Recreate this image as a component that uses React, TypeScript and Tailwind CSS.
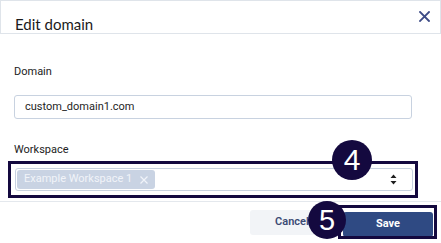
import React from 'react';

const Badge = ({ n, className }: { n: string; className: string }) => (
  <div
    className={`absolute rounded-full bg-[#14093f] text-white flex items-center justify-center font-['Liberation_Sans',sans-serif] leading-none ${className}`}
  >
    {n}
  </div>
);

export default function App() {
  return (
    <div className="relative w-[441px] h-[243px] overflow-hidden bg-white font-['Roboto',sans-serif] text-[#222]">
      {/* Header */}
      <div className="h-[34px] border border-[#dfe4ea] flex justify-between items-start">
        <div className="pl-[14px] pt-[13px] text-[15px] leading-[20px] text-[#1b1b1b] font-['Lato',sans-serif]">
          Edit domain
        </div>
        <svg className="mt-[10px] mr-[10px]" width="11" height="11" viewBox="0 0 11 11">
          <path d="M1 1L10 10M10 1L1 10" stroke="#3d4b86" strokeWidth="1.8" strokeLinecap="square" />
        </svg>
      </div>

      {/* Body */}
      <div className="px-[14px] pt-[31px] pb-[10px]">
        <div className="text-[11px] leading-[13px] text-[#222]">Domain</div>
        <div className="mt-[17px] w-[398px] h-[24px] border border-[#c8d2e0] rounded-[3px] flex items-center pl-[10px] text-[11px] text-[#1e1e1e]">
          custom_domain1.com
        </div>

        <div className="mt-[24px] text-[11px] leading-[13px] text-[#222]">Workspace</div>
        <div className="relative mt-[12px]">
          <div className="w-[398px] h-[23px] ml-[1px] border border-[#c8d2e0] rounded-[3px] flex items-center justify-between pl-[1px] pr-[15px]">
            <div className="h-[19px] px-[7px] rounded-[3px] bg-[#c9d3e3] flex items-center gap-[8px] text-[11px] text-[#f1f4f9]">
              <span>Example Workspace 1</span>
              <svg width="8" height="8" viewBox="0 0 8 8">
                <path d="M0.5 0.5L7.5 7.5M7.5 0.5L0.5 7.5" stroke="#f1f4f9" strokeWidth="1.2" />
              </svg>
            </div>
            <svg width="7" height="11" viewBox="0 0 7 11">
              <path d="M3.5 0.5L6.5 4H0.5Z M0.5 7H6.5L3.5 10.5Z" fill="#1e1e1e" />
            </svg>
          </div>
          {/* highlight */}
          <div className="absolute -left-[6px] -top-[7px] w-[410px] h-[37px] border-[3px] border-[#14093f]" />
        </div>
      </div>

      {/* Footer */}
      <div className="border-t border-[#e4e8ed] pt-[8px] pr-[8px] flex justify-end gap-[9px]">
        <button className="w-[84px] h-[25px] rounded-[3px] bg-[#f2f4f7] text-[11px] font-semibold text-[#3b4a74]">
          Cancel
        </button>
        <div className="relative">
          <button className="w-[90px] h-[25px] rounded-[3px] bg-[#2f4a83] text-[11px] font-bold text-white">
            Save
          </button>
          <div className="absolute -left-[5px] -top-[5px] w-[99px] h-[34px] border-[3px] border-[#14093f]" />
        </div>
      </div>

      <Badge n="4" className="left-[332px] top-[140px] w-[40px] h-[40px] text-[30px]" />
      <Badge n="5" className="left-[308px] top-[201px] w-[38px] h-[38px] text-[29px]" />
    </div>
  );
}
